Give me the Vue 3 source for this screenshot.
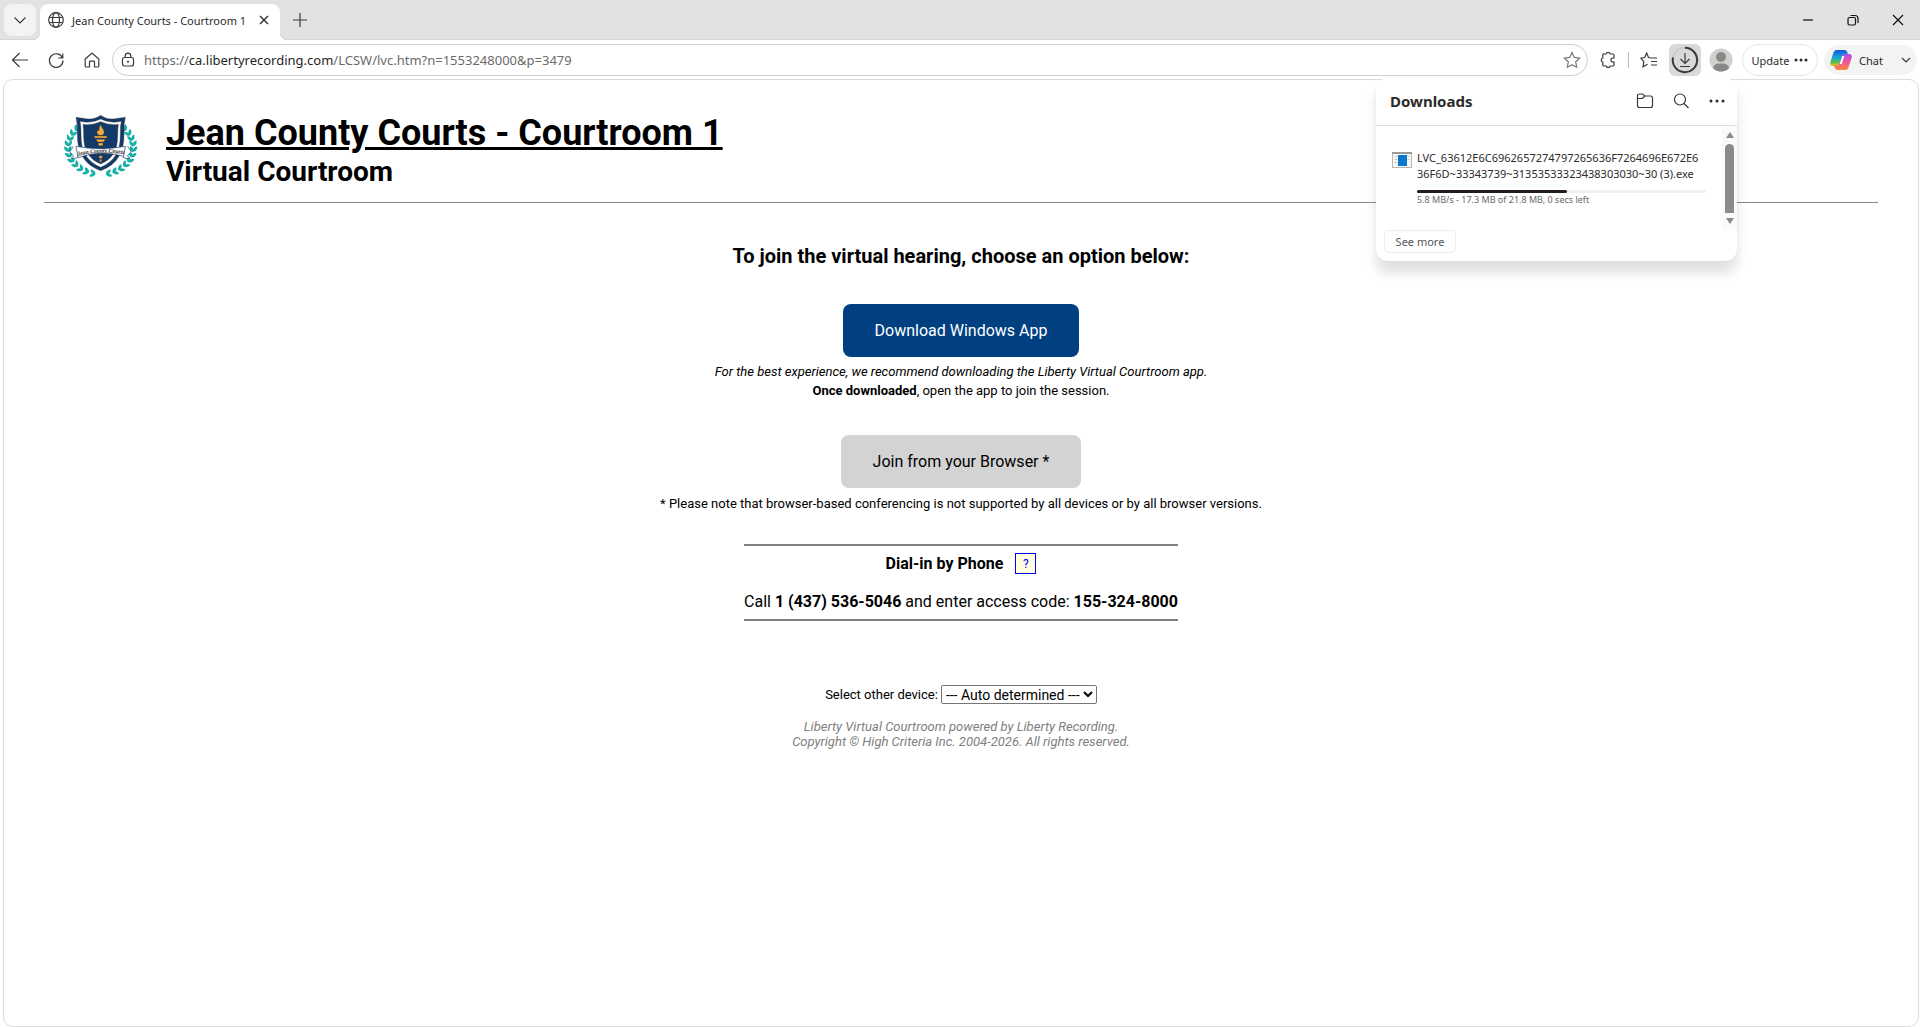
<script setup>
import { ref } from 'vue'

const url = { scheme: 'https://', host: 'ca.libertyrecording.com', path: '/LCSW/lvc.htm?n=1553248000&p=3479' }
const fileLines = ['LVC_63612E6C6962657274797265636F7264696E672E6', '36F6D~33343739~31353533323438303030~30 (3).exe']
const progress = 52
const device = ref('auto')

// Laurel leaves along the left half of an ellipse; the right half is mirrored.
const leaves = []
for (let i = 0; i < 11; i++) {
  const deg = 104 + i * 12
  const t = (deg * Math.PI) / 180
  const tilt = deg + 84
  leaves.push({ x: 137 + 103 * Math.cos(t), y: 127 + 85 * Math.sin(t), r: tilt - 32 })
  leaves.push({ x: 137 + 93 * Math.cos(t), y: 127 + 76 * Math.sin(t), r: tilt + 34 })
}
</script>

<template>
  <div class="browser">
    <header class="tabstrip">
      <button class="tab-search" aria-label="Search tabs">
        <svg width="16" height="16" viewBox="0 0 16 16"><path d="M2.500 5.500 8 11l5.500-5.500" /></svg>
      </button>
      <div class="tab">
        <svg width="16" height="16" viewBox="0 0 16 16"><circle cx="8" cy="8" r="7.300" /><ellipse cx="8" cy="8" rx="3.500" ry="7.300" /><path d="M1.300 5.500h13.400M1.300 10.500h13.400" /></svg>
        <span class="tab-title">Jean County Courts - Courtroom 1</span>
        <button class="bare" aria-label="Close tab">
          <svg class="heavy" width="10" height="10" viewBox="0 0 10 10"><path d="m1 1 8 8M9 1 1 9" /></svg>
        </button>
      </div>
      <button class="bare new-tab" aria-label="New tab">
        <svg width="16" height="16" viewBox="0 0 16 16"><path d="M8 1v14M1 8h14" /></svg>
      </button>
      <div class="window-controls">
        <button aria-label="Minimize"><svg width="10" height="10" viewBox="0 0 10 10"><path d="M0 5h10" /></svg></button>
        <button aria-label="Restore"><svg width="12" height="12" viewBox="0 0 12 12"><rect x="1" y="3.500" width="7.500" height="7.500" rx="1.500" /><path d="M3.500 1.500h4.500a3 3 0 0 1 3 3V9" /></svg></button>
        <button aria-label="Close"><svg width="12" height="12" viewBox="0 0 12 12"><path d="m1 1 10 10M11 1 1 11" /></svg></button>
      </div>
    </header>

    <nav class="toolbar">
      <div class="nav-buttons">
        <button class="bare" aria-label="Back"><svg width="18" height="18" viewBox="0 0 18 18"><path d="M17 9H1.500M8.500 2l-7 7 7 7" /></svg></button>
        <button class="bare" aria-label="Refresh"><svg width="18" height="18" viewBox="0 0 18 18"><path d="M15.500 7A6.800 6.800 0 1 0 16 9.500M15.800 2.500V7h-4.500" /></svg></button>
        <button class="bare" aria-label="Home"><svg width="18" height="18" viewBox="0 0 18 18"><path d="M2.200 8 9 2l6.800 6v7.200q0 .8-.8.8h-3.500v-5q0-.8-.8-.8H7.300q-.8 0-.8.800v5H3q-.8 0-.8-.8z" /></svg></button>
      </div>
      <div class="address">
        <svg width="14" height="16" viewBox="0 0 14 16"><rect x="1.500" y="5.500" width="11" height="8.500" rx="2" /><path d="M4.200 5.500V4a2.800 2.800 0 0 1 5.600 0v1.500" /><circle class="dot" cx="7" cy="9.800" r="1" /></svg>
        <span class="url">{{ url.scheme }}<span class="host">{{ url.host }}</span>{{ url.path }}</span>
        <button class="bare" aria-label="Add to favorites"><svg class="grey" width="18" height="18" viewBox="0 0 18 18"><path d="m9 1.500 2.300 4.900 5.300.7-3.900 3.700 1 5.400L9 13.600l-4.700 2.600 1-5.400-3.900-3.700 5.300-.7z" /></svg></button>
      </div>
      <div class="tools">
        <button class="bare" aria-label="Extensions"><svg width="18" height="18" viewBox="0 0 18 18"><path d="M4 3h3a2.200 2.200 0 0 1 4.200 0H14q1 0 1 1v3h-1a2 2 0 0 0 0 4.200h1V14q0 1-1 1h-2.800a2.200 2.200 0 0 1-4.200 0H5q-1.200 0-1.200-1v-2.800a2.200 2.200 0 0 1 0-4.200V3.500z" /></svg></button>
        <span class="divider"></span>
        <button class="bare" aria-label="Favorites"><svg width="18" height="18" viewBox="0 0 18 18"><path d="M11 7 8.500 6.500 6.700 2 4.700 6.500 1 7.200l2.800 3.400-.8 5.200 4.500-2.500M11 7h6M11 10.500h6M11 14h6" /></svg></button>
        <button class="bare download" aria-label="Downloads">
          <svg width="28" height="28" viewBox="0 0 28 28"><circle class="ring-track" cx="14" cy="14" r="12.200" /><path class="ring" d="M14 1.800A12.200 12.200 0 1 1 2 11.500" /><path d="M14 7v10M9.500 13l4.500 4.500 4.500-4.500M9 20.500h10" /></svg>
        </button>
        <button class="bare avatar" aria-label="Profile"><svg width="24" height="24" viewBox="0 0 24 24"><circle cx="12" cy="12" r="11.500" fill="#d2d0ce" /><circle cx="12" cy="9" r="5" fill="#8a8886" /><path d="M4 20.300C5 15.800 8 15.500 12 15.500s7 .3 8 4.800a11.500 11.500 0 0 1-16 0z" fill="#8a8886" /></svg></button>
        <button class="update">Update<svg width="14" height="4" viewBox="0 0 14 4"><g class="dot"><circle cx="2" cy="2" r="1.500" /><circle cx="7" cy="2" r="1.500" /><circle cx="12" cy="2" r="1.500" /></g></svg></button>
        <button class="chat">
          <svg width="24" height="24" viewBox="0 0 24 24">
            <defs>
              <linearGradient id="blue" x1="0" y1="0" x2="0" y2="1"><stop offset="0" stop-color="#1558d6" /><stop offset=".45" stop-color="#12a5e0" /><stop offset=".75" stop-color="#54bd56" /><stop offset="1" stop-color="#f4c414" /></linearGradient>
              <linearGradient id="pink" x1="0" y1="0" x2="0" y2="1"><stop offset="0" stop-color="#a950ee" /><stop offset=".5" stop-color="#ef559b" /><stop offset="1" stop-color="#fb8a3c" /></linearGradient>
            </defs>
            <path d="M7.500 2h8q2 0 2.700 2l.8 2.500h-3q-2 0-2.600 2L11 16q-.7 2-2.700 2H4q-3.500 0-2.600-4L4.500 4.500Q5.300 2 7.500 2z" fill="url(#blue)" />
            <path d="M16.500 22h-8q-2 0-2.700-2L5 17.500h3q2 0 2.600-2L13 8q.7-2 2.700-2H20q3.500 0 2.600 4l-3.100 9.500q-.8 2.500-3 2.500z" fill="url(#pink)" />
            <path d="M13.300 8h2l-2.600 8h-2z" fill="#fff" />
          </svg>
          <span>Chat</span>
          <svg class="chat-arrow" width="10" height="10" viewBox="0 0 10 10"><path d="m1 3 4 4 4-4" /></svg>
        </button>
      </div>
    </nav>

    <main class="page">
      <div class="court-header">
        <svg class="crest" width="95" height="85" viewBox="0 0 285 255" role="img" aria-label="Court crest">
          <g v-for="side in 2" :key="side" :transform="side === 2 ? 'translate(274 0) scale(-1 1)' : ''">
            <path v-for="(l, i) in leaves" :key="i" class="leaf" d="M-10 0Q-1-10 11 0 0 9-10 0z" :transform="`translate(${l.x} ${l.y}) rotate(${l.r})`" />
          </g>
          <path d="M137 31q-18 14-44 10-14-2-30-4 6 22 4 50 0 46 16 68 16 28 54 42 38-14 54-42 16-22 16-68-2-28 4-50-16 2-30 4-26 4-44-10z" fill="#123a68" />
          <path d="M137 42q-22 12-48 9l-14-2q4 16 3 40 0 42 14 62 15 24 45 36 30-12 45-36 14-20 14-62-1-24 3-40l-14 2q-26 3-48-9z" fill="#fff" />
          <path d="M137 50q-22 10-45 9l-8-1q2 14 2 33 0 38 13 56 13 20 38 30 25-10 38-30 13-18 13-56 0-19 2-33l-8 1q-23 1-45-9z" fill="#123a68" />
          <g fill="#f4ad3d"><path d="M137 58q2 9 8 15 6 12-3 18h-10q-10-6-4-17l4 4q-1-10 5-20zM118 93h38v6h-38zM123 103h28l-5 8h-18zM130 114h14v8h-14zM132 152h10v8h-10zM134 163h6v8h-6z" /></g>
          <path d="M55 124 44 141l12 11-8 9 18-2 7-12M218 124l11 17-12 11 8 9-18-2-7-12" fill="#fff" stroke="#123a68" stroke-width="2" />
          <path d="M63 124q74 14 148 0l-5 30q-68-20-137 4z" fill="#fff" stroke="#123a68" stroke-width="2" />
          <path id="ribbon" d="M68 152q66-17 140-5" fill="none" />
          <text class="crest-name"><textPath href="#ribbon" startOffset="50%">Jean County Courts</textPath></text>
        </svg>
        <div>
          <h1>Jean County Courts - Courtroom 1</h1>
          <h2>Virtual Courtroom</h2>
        </div>
      </div>

      <section class="options">
        <h3>To join the virtual hearing, choose an option below:</h3>
        <button class="option primary">Download Windows App</button>
        <p class="note after-primary"><i>For the best experience, we recommend downloading the Liberty Virtual Courtroom app.</i><br /><b>Once downloaded</b>, open the app to join the session.</p>
        <button class="option secondary">Join from your Browser *</button>
        <p class="note after-secondary">* Please note that browser-based conferencing is not supported by all devices or by all browser versions.</p>
        <div class="dial-in">
          <div class="dial-title"><b>Dial-in by Phone</b><button class="help">?</button></div>
          <div>Call <b>1 (437) 536-5046</b> and enter access code: <b>155-324-8000</b></div>
        </div>
        <div class="device">
          <label for="device">Select other device:</label>
          <select id="device" v-model="device"><option value="auto">--- Auto determined ---</option></select>
        </div>
        <footer>Liberty Virtual Courtroom powered by Liberty Recording.<br />Copyright © High Criteria Inc. 2004-2026. All rights reserved.</footer>
      </section>
    </main>

    <aside class="downloads">
      <div class="dl-head">
        <strong>Downloads</strong>
        <button class="bare" aria-label="Open downloads folder"><svg width="18" height="18" viewBox="0 0 18 18"><path d="M1.500 4q0-2 2-2h3L9 4h5.500q2 0 2 2v7.500q0 2-2 2h-11q-2 0-2-2zM1.500 6.500h4Q6.500 6.500 9 4" /></svg></button>
        <button class="bare" aria-label="Search downloads"><svg width="18" height="18" viewBox="0 0 18 18"><circle cx="8" cy="7.500" r="5.500" /><path d="m12 11.500 4.500 4.500" /></svg></button>
        <button class="bare" aria-label="More options"><svg width="18" height="18" viewBox="0 0 18 18"><g class="dot"><circle cx="3" cy="9" r="1.500" /><circle cx="9" cy="9" r="1.500" /><circle cx="15" cy="9" r="1.500" /></g></svg></button>
      </div>
      <div class="dl-body">
        <svg class="file-icon" width="20" height="16" viewBox="0 0 20 16"><rect x=".5" y=".5" width="19" height="15" fill="#f7f7f7" stroke="#b5b5b5" /><path d="M0 1h20" stroke="#9a9a9a" stroke-width="2" /><path d="M2.500 4.500h3M2.500 7.500h3M2.500 10.500h3M15.500 4.500h2M15.500 7.500h2" stroke="#c4c4c4" /><rect x="6" y="3" width="9" height="11" fill="#0a78cf" stroke="none" /></svg>
        <div class="file">
          <div class="file-name">{{ fileLines[0] }}<br />{{ fileLines[1] }}</div>
          <div class="bar"><div class="bar-fill" :style="{ width: progress + '%' }"></div></div>
          <div class="file-status">5.8 MB/s - 17.3 MB of 21.8 MB, 0 secs left</div>
        </div>
        <div class="scrollbar">
          <svg width="10" height="6" viewBox="0 0 10 6"><path d="M5 0 9 6H1z" /></svg>
          <span class="thumb"></span>
          <svg width="10" height="6" viewBox="0 0 10 6"><path d="M5 6 9 0H1z" /></svg>
        </div>
      </div>
      <button class="see-more">See more</button>
    </aside>
  </div>
</template>

<style>
body {
  background: #fff;
}
</style>

<style scoped>
.browser {
  position: relative;
  display: flex;
  flex-direction: column;
  min-height: 100vh;
  font-family: "Noto Sans", "Open Sans", sans-serif;
  color: #2b2b2b;
}
.browser * {
  box-sizing: border-box;
}
button {
  font-family: inherit;
  color: inherit;
  border: 0;
  padding: 0;
}
svg {
  display: block;
  flex: none;
  fill: none;
  stroke: #3b3b3b;
  stroke-width: 1.2;
}
.dot {
  fill: #2b2b2b;
  stroke: none;
}
.bare {
  display: flex;
  align-items: center;
  justify-content: center;
  background: none;
}
.tabstrip {
  display: flex;
  height: 40px;
  padding: 4px 0 0 4px;
  background: #e2e2e2;
  border-bottom: 1px solid #d6d6d6;
}
.tab-search {
  display: flex;
  align-items: center;
  justify-content: center;
  width: 32px;
  height: 32px;
  border-radius: 8px;
  background: #f3f3f3;
}
.tab {
  position: relative;
  display: flex;
  align-items: center;
  gap: 8px;
  width: 240px;
  height: 36px;
  margin-left: 4px;
  padding: 0 11px 4px 8px;
  border-radius: 8px 8px 0 0;
  background: #fff;
}
.tab::before,
.tab::after {
  content: "";
  position: absolute;
  bottom: 0;
  width: 6px;
  height: 6px;
}
.tab::before {
  right: 100%;
  background: radial-gradient(circle at 0 0, transparent 6px, #fff 6px);
}
.tab::after {
  left: 100%;
  background: radial-gradient(circle at 100% 0, transparent 6px, #fff 6px);
}
.tab-title {
  flex: 1;
  font-size: 11px;
  white-space: nowrap;
}
.heavy {
  stroke-width: 1.6;
}
.new-tab {
  width: 40px;
  height: 32px;
}
.window-controls {
  display: flex;
  margin-left: auto;
}
.window-controls button {
  display: flex;
  align-items: center;
  justify-content: center;
  width: 45px;
  height: 32px;
  background: none;
}
.window-controls svg {
  stroke: #111;
}
.toolbar {
  display: flex;
  align-items: center;
  height: 39px;
  padding: 4px 3px 3px 11px;
}
.nav-buttons {
  display: flex;
  gap: 18px;
  width: 101px;
}
.address {
  flex: 1;
  display: flex;
  align-items: center;
  gap: 9px;
  height: 32px;
  padding: 0 6px 0 8px;
  border: 1px solid #cfcfcf;
  border-radius: 16px;
}
.url {
  flex: 1;
  font-size: 13px;
  color: #6b6b6b;
}
.host {
  color: #1f1f1f;
}
.grey {
  stroke: #767676;
}
.tools {
  display: flex;
  align-items: center;
  padding-left: 11px;
}
.divider {
  width: 1px;
  height: 16px;
  margin: 0 11px;
  background: #bdbdbd;
}
.download {
  width: 32px;
  height: 32px;
  margin: 0 8px 0 11px;
  border-radius: 6px;
  background: #d9d9d9;
}
.ring-track {
  stroke: #cacaca;
  stroke-width: 2;
}
.ring {
  stroke-width: 2;
}
.avatar svg {
  stroke: none;
}
.update {
  display: flex;
  align-items: center;
  justify-content: center;
  gap: 5px;
  width: 76px;
  height: 32px;
  margin: 0 6px 0 9px;
  border: 1px solid #e6e6e6;
  border-radius: 16px;
  background: #fff;
  font-size: 11px;
}
.chat {
  display: flex;
  align-items: center;
  width: 93px;
  height: 30px;
  padding: 0 6px 0 5px;
  border-radius: 15px;
  background: #f3f3f3;
  font-size: 11px;
}
.chat svg:first-child {
  stroke: none;
  margin-right: 6px;
}
.chat-arrow {
  margin-left: auto;
}
.page {
  flex: 1;
  margin: 0 1px 0 3px;
  padding: 25px 40px 0;
  border: 1px solid #dcdcdc;
  border-radius: 10px;
  font-family: Roboto, sans-serif;
  font-size: 16px;
  color: #000;
}
.court-header {
  display: flex;
  gap: 16px;
  height: 98px;
  padding-left: 11px;
  border-bottom: 1px solid #8a8a8a;
}
.crest-name {
  font: italic 700 17px "Liberation Serif", serif;
  text-anchor: middle;
  fill: #333;
  stroke: none;
}
.leaf {
  fill: #14b0a6;
  stroke: none;
}
h1,
h2,
h3,
p {
  margin: 0;
}
h1 {
  margin-top: 7px;
  font-size: 36px;
  line-height: 42px;
  font-weight: 700;
  text-decoration: underline;
}
h2 {
  font-size: 28px;
  line-height: 36px;
  font-weight: 700;
}
.options {
  display: flex;
  flex-direction: column;
  align-items: center;
  padding-top: 41px;
  text-align: center;
}
h3 {
  margin-bottom: 36px;
  font-size: 20px;
  line-height: 24px;
  font-weight: 700;
}
.option {
  height: 53px;
  padding: 0 32px 1px;
  border-radius: 8px;
  font-size: 16px;
}
.primary {
  background: #004080;
  color: #fff;
}
.secondary {
  background: #d3d3d3;
  color: #000;
}
.note {
  font-size: 13px;
  line-height: 19px;
}
.after-primary {
  margin: 5px 0 35px;
}
.after-secondary {
  margin: 6px 0 31px;
}
.dial-in {
  padding: 7px 0;
  border: solid #808080;
  border-width: 2px 0;
  line-height: 20px;
}
.dial-title {
  display: flex;
  justify-content: center;
  align-items: center;
  gap: 12px;
  margin-bottom: 18px;
}
.help {
  width: 21px;
  height: 21px;
  border: 1px solid #00f;
  background: #ffffe0;
  color: #00f;
  font-size: 12px;
}
.device {
  display: flex;
  align-items: center;
  gap: 3px;
  margin: 64px 0 15px;
  font-size: 13px;
}
select {
  height: 19px;
  border: 1px solid #767676;
  border-radius: 2px;
  background: #fff;
  font: 14px Roboto, sans-serif;
  color: #000;
}
footer {
  font-size: 13px;
  line-height: 15px;
  font-style: italic;
  color: #808080;
}
.downloads {
  position: absolute;
  top: 78px;
  right: 183px;
  width: 361px;
  height: 183px;
  border-radius: 12px;
  background: #fff;
  box-shadow: 0 12px 12px rgba(0, 0, 0, 0.12), 0 0 3px rgba(0, 0, 0, 0.04);
}
.dl-head {
  display: flex;
  align-items: center;
  gap: 18px;
  height: 48px;
  padding: 0 11px 2px 14px;
  border-bottom: 1px solid #dedede;
}
.dl-head strong {
  margin-right: auto;
  font-size: 15px;
}
.dl-body {
  display: flex;
  height: 103px;
  padding-left: 16px;
}
.file-icon {
  margin: 26px 5px 0 0;
  stroke-width: 1;
}
.file {
  width: 289px;
  padding-top: 24px;
}
.file-name {
  font-size: 11px;
  line-height: 16px;
  white-space: nowrap;
}
.bar {
  height: 3px;
  margin-top: 8px;
  border-radius: 2px;
  background: #efefef;
}
.bar-fill {
  height: 3px;
  border-radius: 2px;
  background: #241c1c;
}
.file-status {
  font-size: 9px;
  line-height: 14px;
  color: #686868;
}
.scrollbar {
  display: flex;
  flex-direction: column;
  align-items: center;
  justify-content: space-between;
  width: 15px;
  margin-left: auto;
  padding: 6px 0 5px;
  background: #fafafa;
}
.scrollbar svg {
  fill: #8a8a8a;
  stroke: none;
}
.thumb {
  width: 9px;
  height: 69px;
  border-radius: 5px 5px 0 0;
  background: #8a8a8a;
}
.see-more {
  width: 72px;
  height: 23px;
  margin-left: 8px;
  border: 1px solid #ececec;
  border-radius: 5px;
  background: #fff;
  font-size: 11px;
  color: #555;
}
</style>
